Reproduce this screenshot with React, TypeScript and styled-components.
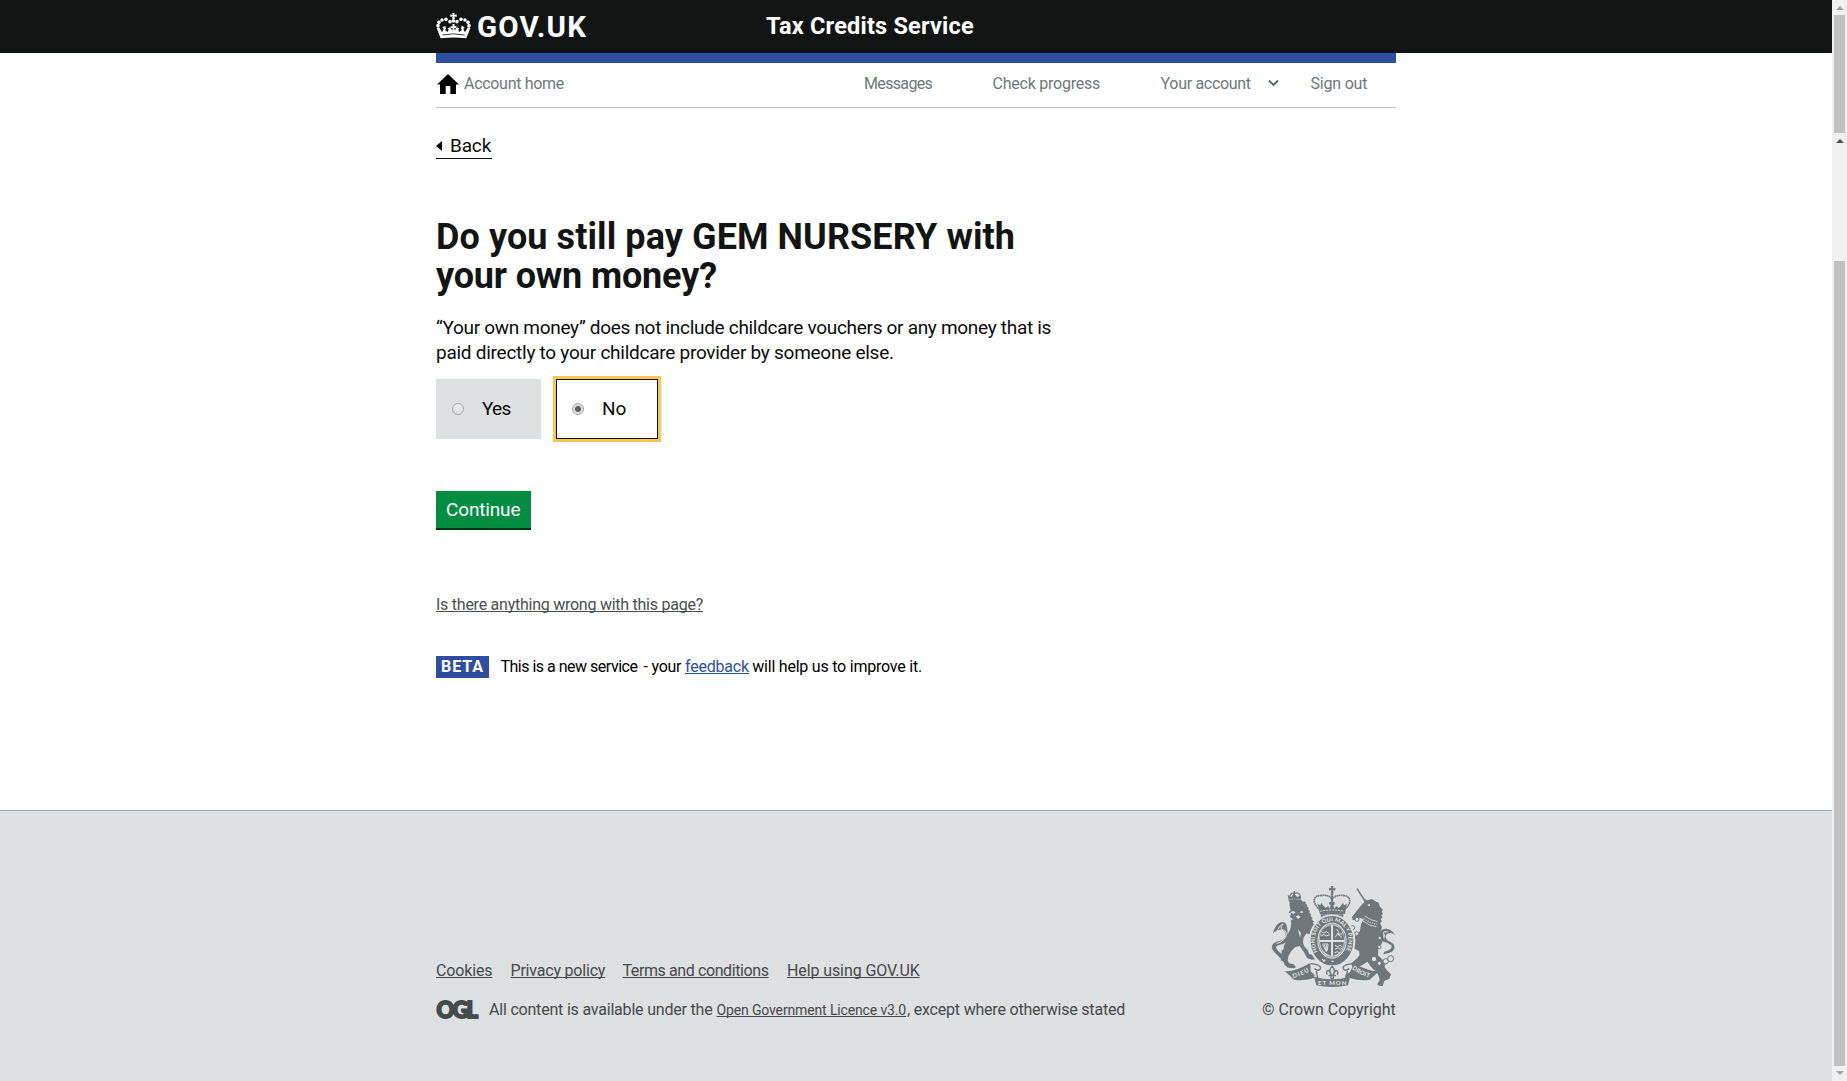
import React from 'react';
import styled, { createGlobalStyle, css } from 'styled-components';

const GlobalStyle = createGlobalStyle`
  * { box-sizing: border-box; }
  html, body { margin: 0; padding: 0; height: 1081px; overflow: hidden; background: #fff; }
  body { font-family: Roboto, "Liberation Sans", sans-serif; color: #0b0c0c; }
  h1, p { margin: 0; }
`;

const Screen = styled.div`
  display: flex;
  width: 1847px;
  height: 1081px;
`;

const Page = styled.div`
  display: flex;
  flex-direction: column;
  width: 1832px;
  height: 1081px;
`;

const Container = styled.div`
  width: 960px;
  margin: 0 auto;
`;

const Label = styled.span<{ $w?: number; $ls?: number; $underline?: boolean }>`
  display: inline-block;
  white-space: nowrap;
  ${({ $w }) => $w !== undefined && css`width: ${$w}px;`}
  letter-spacing: ${({ $ls }) => $ls ?? 0}px;
  ${({ $underline }) => $underline && css`
    text-decoration: underline;
    text-decoration-thickness: 1px;
    text-underline-offset: 1px;
    text-decoration-skip-ink: none;
  `}
`;

const HeaderBar = styled.header`
  height: 53px;
  background: #131514;
`;

const HeaderInner = styled(Container)`
  display: flex;
  height: 53px;
  color: #fff;
  font-weight: 700;
`;

const Logo = styled.a`
  display: flex;
  width: 330px;
  font-size: 29.5px;
  line-height: 54px;
  svg { margin: 13px 6px 0 0; }
`;

const ServiceName = styled.span`
  font-size: 23.5px;
  line-height: 52px;
`;

const BlueBar = styled.div`
  height: 10px;
  background: #2e4ea2;
`;

const Nav = styled.nav`
  display: flex;
  height: 45px;
  border-bottom: 1px solid #bfc1c3;
  font-size: 16px;
  line-height: 41px;
  color: #6f777b;
`;

const HomeLink = styled.a`
  display: flex;
  width: 428px;
  svg { margin: 11px 5px 0 1px; }
`;

const NavLink = styled.a<{ $w: number }>`
  width: ${({ $w }) => $w}px;
  display: flex;
  svg { margin: 16px 0 0 16px; }
`;

const Main = styled.main`
  display: flex;
  flex-direction: column;
  align-items: flex-start;
  height: 702px;
  padding-top: 25px;
`;

const BackLink = styled.a`
  display: flex;
  width: 56px;
  height: 26px;
  border-bottom: 1px solid #0b0c0c;
  font-size: 19px;
  line-height: 25px;
  svg { margin: 8px 8px 0 0; }
`;

const Heading = styled.h1`
  display: flex;
  flex-direction: column;
  margin-top: 59px;
  font-size: 36px;
  line-height: 39px;
  font-weight: 700;
  color: #131514;
`;

const Lead = styled.p`
  display: flex;
  flex-direction: column;
  margin-top: 19px;
  font-size: 19px;
  line-height: 25px;
`;

const Choices = styled.div`
  display: flex;
  gap: 15px;
  margin-top: 14px;
`;

const Choice = styled.label<{ $selected?: boolean }>`
  display: flex;
  align-items: center;
  height: 60px;
  padding-left: 16px;
  font-size: 19px;
  line-height: 58px;
  width: 105px;
  background: #dee0e2;
  ${({ $selected }) => $selected && css`
    width: 102px;
    padding-left: 15px;
    background: #fff;
    border: 1px solid #0b0c0c;
    outline: 3px solid #fbc551;
  `}
`;

const Radio = styled.input`
  appearance: none;
  width: 12px;
  height: 12px;
  margin: 0 18px 0 0;
  border: 1px solid #a8a8a8;
  border-radius: 50%;
  background: linear-gradient(#eee, #ddd);
  &:checked { background: radial-gradient(circle, #5f5f5f 0 2.6px, #ddd 3.3px); }
`;

const ContinueButton = styled.button`
  margin-top: 52px;
  width: 95px;
  height: 39px;
  padding: 0 0 0 10px;
  border: 0;
  border-bottom: 2px solid #003618;
  background: #008d42;
  color: #fff;
  font: 400 19px/36px Roboto, sans-serif;
  text-align: left;
`;

const ProblemLink = styled.a`
  margin-top: 65px;
  font-size: 16px;
  line-height: 20px;
  color: #4b4d4f;
`;

const Phase = styled.div`
  display: flex;
  margin-top: 41px;
  height: 22px;
  font-size: 16px;
  line-height: 21px;
  color: #000;
`;

const PhaseTag = styled.strong`
  width: 53px;
  height: 22px;
  margin-right: 11.5px;
  padding-left: 5px;
  background: #2e4ea2;
  color: #fff;
  font-weight: 700;
`;

const FeedbackLink = styled.a`
  color: #2e4ea2;
`;

const Footer = styled.footer`
  flex: 1;
  background: #dee0e2;
  border-top: 1px solid #a1acb2;
  color: #454a4c;
  font-size: 16px;
  line-height: 20px;
`;

const FooterInner = styled(Container)`
  display: flex;
  justify-content: space-between;
`;

const FooterMain = styled.div`
  padding-top: 150px;
`;

const FooterLinks = styled.div`
  display: flex;
  height: 20px;
`;

const FooterLink = styled.a<{ $w: number }>`
  width: ${({ $w }) => $w}px;
`;

const Licence = styled.div`
  display: flex;
  margin-top: 19px;
`;

const OglMark = styled.span`
  width: 53px;
  padding-left: 0.5px;
  font: 900 22px/19px Lato, sans-serif;
  letter-spacing: -1.9px;
  -webkit-text-stroke: 1.8px #454a4c;
`;

const LicenceLink = styled.a`
  font-size: 14px;
  line-height: 21px;
`;

const Copyright = styled.div`
  display: flex;
  flex-direction: column;
  align-items: flex-end;
  padding-top: 75px;
  svg { margin-bottom: 13px; }
`;

const ScrollTrack = styled.div`
  display: flex;
  flex-direction: column;
  align-items: center;
  width: 15px;
  height: 1081px;
  background: #f0f0f0;
`;

const Thumb = styled.div<{ $h: number; $mt: number }>`
  width: 11px;
  height: ${({ $h }) => $h}px;
  margin-top: ${({ $mt }) => $mt}px;
  background: #c1c1c1;
`;

const Arrow = styled.div<{ $mt: number; $c: string; $down?: boolean }>`
  width: 0;
  height: 0;
  margin-top: ${({ $mt }) => $mt}px;
  border: 0 solid transparent;
  border-left-width: 4px;
  border-right-width: 4px;
  ${({ $down, $c }) => ($down ? css`border-top: 4px solid ${$c};` : css`border-bottom: 4px solid ${$c};`)}
`;

const CrownIcon = () => (
  <svg width="35" height="26" viewBox="0 0 105 78" fill="#fff">
    {[[6, 38], [9, 28], [18, 21], [30, 19], [42, 26]].map(([x, y]) => (
      <g key={x}>
        <circle cx={x} cy={y} r="5.4" />
        <circle cx={105 - x} cy={y} r="5.4" />
      </g>
    ))}
    <path d="M49 0h7l-1 6 7-2v8l-7-2 2 9h-9l2-9-7 2V4l7 2z" />
    <circle cx="52.5" cy="24" r="5.5" />
    <path d="M2 45l7-3 9 16 5-10-4-6 9-3 2 8-3 4 8 6 3-7-3-4 7-3 4 5 3 5 1-8-6 1v-7l6 1-1-7h7l-1 7 6-1v7l-6-1 1 8 3-5 4-5 7 3-3 4 3 7 8-6-3-4 2-8 9 3-4 6 5 10 9-16 7 3-12 31Q52 71 14 76z" />
    <path d="M19 66Q52 59 86 66" fill="none" stroke="#131514" strokeWidth="2.5" />
  </svg>
);

const HomeIcon = () => (
  <svg width="22" height="20" viewBox="0 0 22 20">
    <path d="M11 0L22 10.4H19V20H13.3V12H8.7V20H3V10.4H0z" fill="#000" />
  </svg>
);

const lion = 'M70 62l8-7 14-2 14 2 6 5 2-2 6 3-2 4 6 3-2 5 7 5-3 4 6 6-3 3 7 7-3 3 7 8-3 3 7 7-4 3 6 8-2 4 3 7-4 4 9 16 1 13-9 11-8-10-4-17-10-4-9 12-2 15 3 11 10 11 6 13 9 2 8-5 12 4 5 8-6 6-21 2-14-5-8-16-14-20-13 3-12 12-9 16-2 12 4 9 14 3 7 8-6 4-18-2-10-8-4-10-8-4 3-9-4-7 5-5-2-8 7-4 1-12 8-14 2-18 9-16 3-18-2-8 7-4-9-6 3-12-7-2 6-9-2-5z';
const unicorn = 'M282 74l13-14 1-8 8 3 14-4 8 6 12 5 4 12 9 10-4 4 4 8-5 3 4 8-6 3 4 9-6 4 6 12-3 10 6 9-3 12 2 12-6 12-7 12-1 18 12 11 9 14-1 10 8 11 11 11-5 13-15 7-5 15-11-1-6-4 8-12-3-14-7-12-14-12-13-18-15 10-14 6 0 14 5 9-17 8-10-3-8 8-8-5 2-9 13-7 7-14-3-13 16-13 9-11-2-12-17-9-19 0-3-9 17-8-3-13-16-5-9 7-6-9 10-8 16 2 15 7 10-1 8-15 3-20 8-14-10-4-14 6-9 0-2-9z';

const Crest = () => (
  <svg width="125" height="101" viewBox="15 12 375 303" fill="#6f777b">
    {/* supporters */}
    <path d={lion} />
    <path d={unicorn} />
    <path d="M72 91l10-4 7 4-6 5zM101 91l6-4 5 3-4 4zM89 103l9-3 6 5-8 6zM96 142l9 11-3 14z" fill="#dee0e2" />
    <path d="M304 68l7-2 2 5-7 1z" fill="#dee0e2" />
    <path d="M296 102q20 14 38 17M291 117q18 15 40 17" fill="none" stroke="#dee0e2" strokeWidth="2.5" />
    <path d="M293 110q18 13 40 17" fill="none" stroke="#dee0e2" strokeWidth="4" strokeDasharray="3 4" />
    <path d="M301 63L273 20" stroke="#6f777b" strokeWidth="4.5" />
    {/* tails */}
    <path d="M47 233C28 211 11 203 20 188C29 174 59 181 59 157C58 139 36 139 21 153C29 119 55 112 61 128C67 144 61 151 68 162C69 187 42 187 33 191C23 202 45 210 53 224z" />
    <path d="M35 143Q42 129 51 126Q43 134 46 143Q57 140 62 155Q59 177 31 185" fill="none" stroke="#dee0e2" strokeWidth="3" />
    <path d="M354 209Q382 202 376 190Q366 182 350 178Q334 160 348 143Q372 133 388 160Q373 147 360 158Q356 175 373 179Q393 190 381 207Q370 215 352 217z" />
    <path d="M357 165Q350 156 354 149L366 150M355 169Q350 163 355 157" fill="none" stroke="#dee0e2" strokeWidth="3" />
    {/* lion crown */}
    <path d="M69 60l-4-21 11 6 8-12 9 12 12-5-1 19q-18-5-35 1z" />
    <path d="M71 43q5-13 14-8q10-7 18 5M85 27v9" fill="none" stroke="#6f777b" strokeWidth="4" />
    <path d="M70 53q16-4 34 0" fill="none" stroke="#dee0e2" strokeWidth="2" strokeDasharray="4 3" />
    {/* chain */}
    <g fill="#dee0e2" stroke="#6f777b" strokeWidth="3">
      <circle cx="273" cy="112" r="6" /><circle cx="260" cy="137" r="6" /><circle cx="272" cy="155" r="6" />
      <circle cx="341" cy="168" r="5" /><circle cx="340" cy="195" r="5" />
      <circle cx="324" cy="231" r="8" /><circle cx="340" cy="244" r="6" /><circle cx="359" cy="238" r="8" /><circle cx="374" cy="230" r="9" />
    </g>
    {/* imperial crown */}
    <g>
      <path d="M194 12h9l-2 7 7-2v9l-7-2 2 10h-9l2-10-7 2v-9l7 2z" />
      <path d="M161 83C137 62 142 41 161 41Q190 36 198 52Q210 36 235 41C255 42 258 66 235 83" fill="none" stroke="#6f777b" strokeWidth="5" strokeDasharray="5 1.4" />
      <path d="M198 34V78" stroke="#6f777b" strokeWidth="7" strokeDasharray="5 1" />
      <path d="M154 65l9 5 3-8 6 9 7 6 8-5 3 8 5-10-6-3 1-7 16 0 0 8-5 2 5 10 4-8 8 5 7-6 6-9 3 8 9-5-6 31H162z" />
      <path d="M163 88Q198 80 234 88" fill="none" stroke="#dee0e2" strokeWidth="3" strokeDasharray="6 3" />
      <path d="M164 97h68v8q-34-7-68 0z" />
    </g>
    {/* garter */}
    <ellipse cx="198" cy="177" rx="56" ry="66" fill="none" stroke="#dee0e2" strokeWidth="28" />
    <ellipse cx="198" cy="176" rx="54" ry="64" fill="none" stroke="#6f777b" strokeWidth="20" />
    <path id="garterText" d="M155 210C133 160 158 118 198 118C241 118 264 172 233 220" fill="none" />
    <text fontFamily="Lato, sans-serif" fontWeight="900" fontSize="17" fill="#dee0e2">
      <textPath href="#garterText" textLength="238">HONI SOIT QUI MAL Y PENSE</textPath>
    </text>
    <ellipse cx="198" cy="176" rx="40" ry="50" fill="#dee0e2" stroke="#6f777b" strokeWidth="2" />
    <path d="M162 174Q160 137 195 130V174zM201 130Q235 136 234 174H201zM162 180H195V222Q163 211 162 180zM201 180H234Q233 213 201 222z" />
    <g fill="none" stroke="#dee0e2" strokeWidth="3">
      <path d="M166 149l8 4 7-4 8 5M165 162l9-5 6 5 12-4M211 142l7 6-2 9 12 9M208 166l6-11 12 2 5-8M207 190l8 4 7-4 8 5M207 202l9-5 6 5 6-3M205 213l8-4 7 3" />
      <path d="M170 186h16l-2 20M170 188l11 21M175 188l6 20M181 188v20" />
    </g>
    <path d="M169 231l4 6 5-4M196 238h7" stroke="#dee0e2" strokeWidth="4" fill="none" />
    {/* motto ribbon */}
    <path d="M56 267Q81 272 133 243L134 268L146 279L144 288Q110 299 84 293Q73 282 56 267z" />
    <path d="M340 267Q315 272 262 243L261 268L249 279L251 288Q285 299 311 293Q324 282 340 267z" />
    <path d="M144 284Q198 299 252 284L246 310Q198 320 151 310z" />
    <path d="M134 245Q161 247 164 257Q161 271 145 260M261 245Q234 247 231 257Q234 271 250 260M151 267L156 292M244 267L240 292" fill="none" stroke="#6f777b" strokeWidth="4" />
    <path id="dieu" d="M82 289Q111 281 136 263" fill="none" />
    <path id="droit" d="M257 261Q284 281 317 289" fill="none" />
    <g fontFamily="Lato, sans-serif" fontWeight="900" fontSize="18" fill="#dee0e2">
      <text><textPath href="#dieu" textLength="53">DIEU</textPath></text>
      <text><textPath href="#droit" textLength="59">DROIT</textPath></text>
      <text x="156" y="309" textLength="85">ET MON</text>
    </g>
    {/* fleur */}
    <path d="M198 253Q187 265 195 276V289H202V276Q210 265 198 253zM183 278Q179 266 187 265Q194 269 194 280H203Q203 269 210 265Q218 266 214 278M187 281h23" fill="none" stroke="#6f777b" strokeWidth="4" />
  </svg>
);

const footerLinks = [
  { text: 'Cookies', w: 74.5, ls: -0.15 },
  { text: 'Privacy policy', w: 112, ls: -0.2 },
  { text: 'Terms and conditions', w: 164.5, ls: -0.4 },
  { text: 'Help using GOV.UK', w: 133, ls: -0.1 },
];

export default function App() {
  return (
    <Screen>
      <GlobalStyle />
      <Page>
        <HeaderBar>
          <HeaderInner>
            <Logo>
              <CrownIcon />
              <Label $ls={1.2}>GOV.UK</Label>
            </Logo>
            <ServiceName><Label $ls={0.2}>Tax Credits Service</Label></ServiceName>
          </HeaderInner>
        </HeaderBar>
        <Container>
          <BlueBar />
          <Nav>
            <HomeLink>
              <HomeIcon />
              <Label $ls={-0.3}>Account home</Label>
            </HomeLink>
            <NavLink $w={128.5}><Label $ls={-0.65}>Messages</Label></NavLink>
            <NavLink $w={168}><Label $ls={-0.23}>Check progress</Label></NavLink>
            <NavLink $w={150}>
              <Label $w={91} $ls={-0.3}>Your account</Label>
              <svg width="11" height="8" viewBox="0 0 11 8"><path d="M1 1.5L5.5 6L10 1.5" fill="none" stroke="#5b6265" strokeWidth="1.8" /></svg>
            </NavLink>
            <NavLink $w={60}><Label $ls={-0.2}>Sign out</Label></NavLink>
          </Nav>
          <Main>
            <BackLink>
              <svg width="6" height="10" viewBox="0 0 6 10"><path d="M6 0V10L0 5z" fill="#0b0c0c" /></svg>
              <Label $ls={-0.15}>Back</Label>
            </BackLink>
            <Heading>
              <Label $ls={0.09}>Do you still pay GEM NURSERY with</Label>
              <Label $ls={-0.16}>your own money?</Label>
            </Heading>
            <Lead>
              <Label $ls={-0.3}>“Your own money” does not include childcare vouchers or any money that is</Label>
              <Label $ls={-0.26}>paid directly to your childcare provider by someone else.</Label>
            </Lead>
            <Choices>
              <Choice>
                <Radio type="radio" name="pay" />
                <Label $ls={-0.7}>Yes</Label>
              </Choice>
              <Choice $selected>
                <Radio type="radio" name="pay" defaultChecked />
                <Label $ls={0}>No</Label>
              </Choice>
            </Choices>
            <ContinueButton><Label $ls={-0.15}>Continue</Label></ContinueButton>
            <ProblemLink><Label $ls={-0.25} $underline>Is there anything wrong with this page?</Label></ProblemLink>
            <Phase>
              <PhaseTag><Label $ls={0.95}>BETA</Label></PhaseTag>
              <Label $w={143} $ls={-0.5}>This is a new service</Label>
              <Label $w={8}>-</Label>
              <Label $w={33.5} $ls={-0.3}>your</Label>
              <FeedbackLink><Label $w={63.5} $ls={-0.2} $underline>feedback</Label></FeedbackLink>
              <Label $ls={-0.22}>&nbsp;will help us to improve it.</Label>
            </Phase>
          </Main>
        </Container>
        <Footer>
          <FooterInner>
            <FooterMain>
              <FooterLinks>
                {footerLinks.map(({ text, w, ls }) => (
                  <FooterLink key={text} $w={w}><Label $ls={ls} $underline>{text}</Label></FooterLink>
                ))}
              </FooterLinks>
              <Licence>
                <OglMark>OGL</OglMark>
                <Label $w={227.5} $ls={-0.2}>All content is available under the</Label>
                <LicenceLink><Label $w={190.5} $ls={-0.14} $underline>Open Government Licence v3.0</Label></LicenceLink>
                <Label $ls={-0.2}>, except where otherwise stated</Label>
              </Licence>
            </FooterMain>
            <Copyright>
              <Crest />
              <Label $w={134} $ls={-0.05}>© Crown Copyright</Label>
            </Copyright>
          </FooterInner>
        </Footer>
      </Page>
      <ScrollTrack>
        <Arrow $mt={6} $c="#a3a3a3" />
        <Thumb $mt={5} $h={118} />
        <Arrow $mt={6} $c="#505050" />
        <Thumb $mt={118} $h={805} />
        <Arrow $mt={5} $c="#a3a3a3" $down />
      </ScrollTrack>
    </Screen>
  );
}
